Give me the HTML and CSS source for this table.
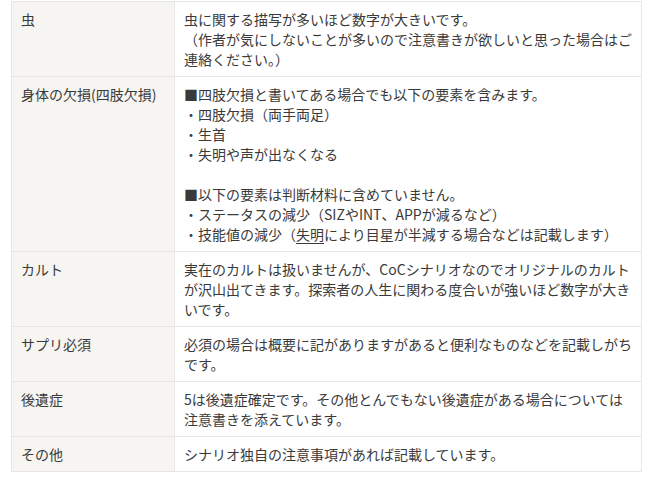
FILE: index.html
```html
<!DOCTYPE html>
<html lang="ja">
<head>
<meta charset="utf-8">
<link rel="stylesheet" href="styles.css">
</head>
<body>
<div class="wrap">
<table class="tbl">
<colgroup><col class="c1"><col class="c2"></colgroup>
<tbody>
<tr><th>虫</th><td>虫に関する描写が多いほど数字が大きいです。<br>（作者が気にしないことが多いので注意書きが欲しいと思った場合はご連絡ください。）</td></tr>
<tr><th>身体の欠損(四肢欠損)</th><td>■四肢欠損と書いてある場合でも以下の要素を含みます。<br>・四肢欠損（両手両足）<br>・生首<br>・失明や声が出なくなる<br><br>■以下の要素は判断材料に含めていません。<br>・ステータスの減少（SIZやINT、APPが減るなど）<br>・技能値の減少（<span class="u">失明</span>により目星が半減する場合などは記載します）</td></tr>
<tr><th>カルト</th><td>実在のカルトは扱いませんが、CoCシナリオなのでオリジナルのカルトが沢山出てきます。探索者の人生に関わる度合いが強いほど数字が大きいです。</td></tr>
<tr><th>サプリ必須</th><td>必須の場合は概要に記がありますがあると便利なものなどを記載しがちです。</td></tr>
<tr><th>後遺症</th><td>5は後遺症確定です。その他とんでもない後遺症がある場合については注意書きを添えています。</td></tr>
<tr><th>その他</th><td>シナリオ独自の注意事項があれば記載しています。</td></tr>
</tbody>
</table>
</div>
</body>
</html>
```
FILE: styles.css
```css
html, body {
  margin: 0;
  padding: 0;
  background: #ffffff;
}
.wrap {
  padding: 1px 0 0 11px;
}
.tbl {
  border-collapse: collapse;
  table-layout: fixed;
  width: 631px;
  font-family: "Noto Sans CJK JP", "Noto Sans", sans-serif;
  font-size: 14px;
  line-height: 20px;
  color: #3a3a3a;
}
.c1 { width: 163px; }
.tbl th, .tbl td {
  border: 1px solid #e6e6e6;
  padding: 7px 9px;
  text-align: left;
  vertical-align: top;
  font-weight: normal;
}
.tbl th {
  background: #f6f5f2;
}
.tbl td {
  background: #ffffff;
  word-break: normal;
  line-break: strict;
}
.u {
  text-decoration: underline;
  text-underline-offset: 3px;
}
```
